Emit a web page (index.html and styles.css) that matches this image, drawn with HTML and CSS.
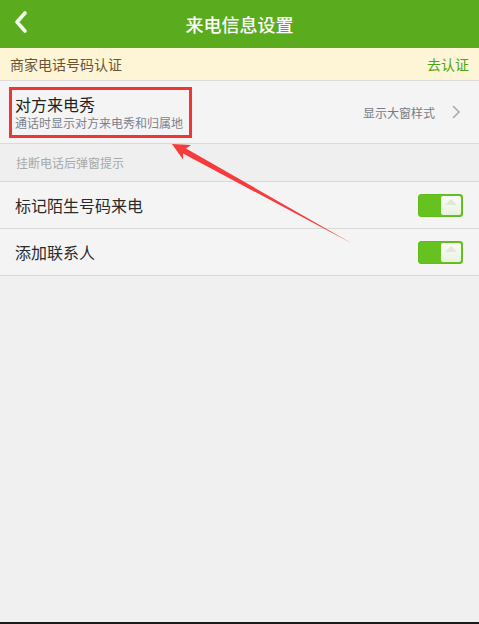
FILE: index.html
```html
<!DOCTYPE html>
<html lang="zh">
<head>
<meta charset="utf-8">
<title>来电信息设置</title>
<link rel="stylesheet" href="styles.css">
</head>
<body>
<div class="page">
  <header class="topbar">
    <span class="back">
      <svg width="16" height="24" viewBox="0 0 16 24"><path d="M12 3 L4 12 L12 21" fill="none" stroke="#f4faef" stroke-width="3.6" stroke-linecap="round" stroke-linejoin="round"/></svg>
    </span>
    <h1 class="title">来电信息设置</h1>
  </header>

  <div class="banner">
    <span class="banner-text">商家电话号码认证</span>
    <span class="banner-link">去认证</span>
  </div>

  <div class="row row-tall">
    <div class="highlight">
      <div class="row-title">对方来电秀</div>
      <div class="row-sub">通话时显示对方来电秀和归属地</div>
    </div>
    <div class="row-right">
      <span class="row-value">显示大窗样式</span>
      <svg class="chev" width="10" height="16" viewBox="0 0 10 16"><path d="M2 2 L8 8 L2 14" fill="none" stroke="#a9a9a9" stroke-width="1.6"/></svg>
    </div>
  </div>

  <div class="section">挂断电话后弹窗提示</div>

  <div class="row">
    <span class="row-label">标记陌生号码来电</span>
    <span class="toggle"><span class="knob"></span></span>
  </div>
  <div class="row">
    <span class="row-label">添加联系人</span>
    <span class="toggle"><span class="knob"></span></span>
  </div>

  <div class="fill"></div>

  <svg class="arrow" width="479" height="624" viewBox="0 0 479 624">
    <polygon points="172,144 191,145 186,148.5 352,243.5 183,153.5 183,159.5" fill="#f53b3b"/>
  </svg>
</div>
</body>
</html>
```

FILE: styles.css
```css
* { box-sizing: border-box; }
html, body { margin: 0; padding: 0; }
body {
  background: #f0f0f0;
  font-family: "Noto Sans CJK SC", "Noto Sans", sans-serif;
}
.page {
  position: relative;
  height: 624px;
  display: flex;
  flex-direction: column;
  border-bottom: 2px solid #1a1a1a;
  overflow: hidden;
}
.topbar {
  height: 48px;
  background: #5bab1f;
  display: flex;
  align-items: center;
  justify-content: center;
  position: relative;
  flex: none;
}
.back {
  position: absolute;
  left: 13px;
  top: 10px;
  display: flex;
}
.title {
  margin: 0;
  font-size: 18px;
  font-weight: 500;
  color: #ffffff;
  line-height: 48px;
}
.banner {
  height: 33px;
  background: #fdf5d5;
  border-bottom: 1px solid #dcdcdc;
  display: flex;
  align-items: center;
  justify-content: space-between;
  padding: 0 10px 0 10px;
  font-size: 14px;
  flex: none;
}
.banner-text { color: #6a5437; }
.banner-link { color: #4fa511; }
.row {
  height: 47px;
  background: #f4f4f4;
  border-bottom: 1px solid #d9d9d9;
  display: flex;
  align-items: center;
  justify-content: space-between;
  padding: 0 16px 0 15px;
  flex: none;
}
.row-tall {
  height: 63px;
  padding-left: 9px;
  padding-right: 18px;
  align-items: flex-start;
  padding-top: 6px;
}
.highlight {
  border: 3px solid #f03535;
  padding: 5px 6px 5px 3px;
  display: flex;
  flex-direction: column;
  gap: 2px;
}
.row-title {
  font-size: 16px;
  line-height: 18px;
  color: #222222;
}
.row-sub {
  font-size: 12px;
  line-height: 15px;
  color: #7a8191;
}
.row-right {
  display: flex;
  align-items: center;
  gap: 16px;
  align-self: center;
  margin-top: -6px;
}
.row-value {
  font-size: 12px;
  color: #767c86;
}
.chev { display: block; }
.section {
  height: 38px;
  background: #efefef;
  border-bottom: 1px solid #d9d9d9;
  display: flex;
  align-items: center;
  padding-left: 16px;
  font-size: 12px;
  color: #a8a8a8;
  flex: none;
}
.row-label {
  font-size: 16px;
  color: #2a2a2a;
}
.toggle {
  width: 45px;
  height: 23px;
  border-radius: 3px;
  background: #66c31f;
  border: 1px solid #62bb1d;
  display: flex;
  justify-content: flex-end;
  align-items: center;
  padding-right: 1px;
}
.knob {
  width: 20px;
  height: 19px;
  border-radius: 2px;
  background: linear-gradient(#fbfdf8, #e8f2df);
  display: flex;
  justify-content: center;
  padding-top: 3px;
}
.knob::before {
  content: "";
  width: 0;
  height: 0;
  border-left: 6px solid transparent;
  border-right: 6px solid transparent;
  border-bottom: 6px solid #dfe9d5;
}
.fill { flex: 1; background: #f0f0f0; }
.arrow {
  position: absolute;
  left: 0;
  top: 0;
  pointer-events: none;
}
```
